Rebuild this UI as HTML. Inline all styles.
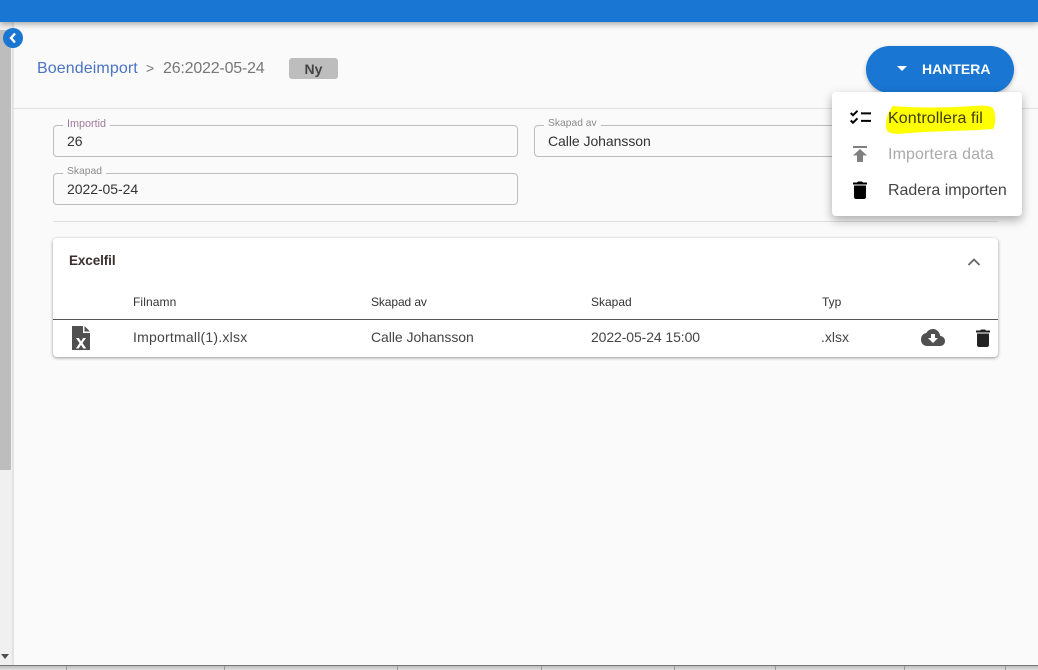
<!DOCTYPE html>
<html>
<head>
<meta charset="utf-8">
<style>
html,body{margin:0;padding:0;width:1038px;height:670px;overflow:hidden;background:#fafafa;font-family:"Liberation Sans",sans-serif;color:#333}
div,span,svg{position:absolute;box-sizing:border-box}
.t{white-space:nowrap;line-height:16px}
.field{border:1px solid #bdbdbd;border-radius:4px;height:32px}
.lab{font-size:10.300px;color:#8a8a8a;background:#fafafa;padding:0 4px;line-height:12px;white-space:nowrap}
.val{font-size:14px;color:#333;white-space:nowrap;line-height:16px}
.th{font-size:12px;color:#333;white-space:nowrap;line-height:14px}
.td{font-size:14px;color:#444;white-space:nowrap;line-height:16px}
.mi{font-size:16px;white-space:nowrap;line-height:18px;color:#444}
</style>
</head>
<body>
<!-- left scroll rail -->
<div style="left:0;top:22px;width:13px;height:643px;background:#f0f0f0;border-right:1px solid #e2e2e2"></div>
<div style="left:0;top:30px;width:11px;height:440px;background:#bdbdbd"></div>
<div style="left:13px;top:22px;width:1px;height:643px;background:#e4e4e4"></div>
<svg style="left:1px;top:654px" width="8" height="5" viewBox="0 0 8 5"><path d="M0 0H8L4 5Z" fill="#505050"/></svg>

<!-- top bar -->
<div style="left:0;top:0;width:1038px;height:22px;background:#1976d2;box-shadow:0 2px 6px rgba(0,0,0,.35)"></div>

<!-- back button -->
<div style="left:3px;top:28px;width:20px;height:20px;border-radius:50%;background:#1976d2"></div>
<svg style="left:3px;top:28px" width="20" height="20" viewBox="0 0 20 20"><path d="M12 5.500L8 10L12 14.500" fill="none" stroke="#fff" stroke-width="2.400"/></svg>

<!-- breadcrumb -->
<div class="t" style="left:37px;top:61px;font-size:16px;color:#4a74c4;letter-spacing:.1px">Boendeimport</div>
<div class="t" style="left:146px;top:60px;font-size:14px;color:#777">&gt;</div>
<div class="t" style="left:163px;top:61px;font-size:16px;color:#777;letter-spacing:-.2px">26:2022-05-24</div>
<div style="left:289px;top:58px;width:49px;height:21px;background:#bdbdbd;border-radius:3px"></div>
<div class="t" style="left:289px;top:61px;width:49px;text-align:center;font-size:14px;font-weight:bold;color:#444">Ny</div>

<div style="left:14px;top:108px;width:1024px;height:1px;background:#e0e0e0"></div>

<!-- fields -->
<div class="field" style="left:53px;top:125px;width:465px"></div>
<div class="lab" style="left:63px;top:118px;height:8px;overflow:visible;font-size:10.800px"><span style="position:static;color:#a07a9a">Importid</span></div>
<div class="val" style="left:67px;top:133px">26</div>

<div class="field" style="left:534px;top:125px;width:464px"></div>
<div class="lab" style="left:544px;top:118px;height:8px">Skapad av</div>
<div class="val" style="left:548px;top:133px;letter-spacing:-.05px">Calle Johansson</div>

<div class="field" style="left:53px;top:173px;width:465px"></div>
<div class="lab" style="left:63px;top:166px;height:8px">Skapad</div>
<div class="val" style="left:67px;top:181px;letter-spacing:-.05px">2022-05-24</div>

<div style="left:53px;top:221px;width:945px;height:1px;background:#e0e0e0"></div>

<!-- card -->
<div style="left:53px;top:238px;width:945px;height:119px;background:#fff;border-radius:4px;box-shadow:0 1px 3px rgba(0,0,0,.4)"></div>
<div class="t" style="left:69px;top:253px;font-size:13.500px;font-weight:bold;color:#3a3030;letter-spacing:-.1px">Excelfil</div>
<svg style="left:966px;top:254px" width="16" height="16" viewBox="0 0 16 16"><path d="M2.500 11L8 5.500L13.500 11" fill="none" stroke="#666" stroke-width="1.800"/></svg>

<div class="th" style="left:133px;top:295px;letter-spacing:.1px">Filnamn</div>
<div class="th" style="left:371px;top:295px;letter-spacing:-.1px">Skapad av</div>
<div class="th" style="left:591px;top:295px">Skapad</div>
<div class="th" style="left:822px;top:295px">Typ</div>
<div style="left:53px;top:319px;width:945px;height:1px;background:#555"></div>

<svg style="left:72px;top:326px" width="18" height="24" viewBox="0 0 18 24"><path d="M0 0H11V7H18V24H0Z" fill="#505050"/><path d="M12.500 0L18 5.500H12.500Z" fill="#505050"/><text x="9" y="22.500" font-family="Liberation Sans,sans-serif" font-size="19" font-weight="bold" fill="#fff" text-anchor="middle">x</text></svg>
<div class="td" style="left:133px;top:329px;letter-spacing:.22px">Importmall(1).xlsx</div>
<div class="td" style="left:371px;top:329px;letter-spacing:-.05px">Calle Johansson</div>
<div class="td" style="left:591px;top:329px;letter-spacing:-.1px">2022-05-24 15:00</div>
<div class="td" style="left:821px;top:329px">.xlsx</div>
<svg style="left:921px;top:329px" width="24" height="18" viewBox="0 0 24 18"><path d="M19.300 7C18.600 3 15.600 0 12 0 9.100 0 6.600 1.600 5.400 4 2.300 4.400 0 6.900 0 10.500 0 14.600 2.700 17 6 17H19C21.800 17 24 15 24 12 24 9.300 22 7.200 19.300 7Z" fill="#505050"/><path d="M10 5H14V9H17L12 14L7 9H10Z" fill="#fff"/></svg>
<svg style="left:976px;top:329px" width="14" height="18" viewBox="0 0 14 18"><path d="M1 4.500H13V16C13 17.100 12.100 18 11 18H3C1.900 18 1 17.100 1 16ZM0 1.500H4L5 .5H9L10 1.500H14V3.500H0Z" fill="#222"/></svg>

<!-- hantera button -->
<div style="left:866px;top:46px;width:148px;height:47px;border-radius:24px;background:#1976d2;box-shadow:0 2px 4px rgba(0,0,0,.25)"></div>
<svg style="left:897px;top:66px" width="10" height="6" viewBox="0 0 10 6"><path d="M0 0H10L5 5Z" fill="#fff"/></svg>
<div class="t" style="left:922px;top:61px;font-size:14px;font-weight:bold;color:#fff">HANTERA</div>

<!-- menu -->
<div style="left:832px;top:92px;width:190px;height:124px;background:#fff;border-radius:4px;box-shadow:0 4px 10px rgba(0,0,0,.32)"></div>
<svg style="left:885px;top:104px" width="113" height="31" viewBox="0 0 113 31"><path d="M8 2C30 4 60 4 88 2 98 1 106 2 108 4 111 10 111 20 108 25 85 27 40 27 14 30 6 30 0 29 1 20 1 14 3 8 8 2Z" fill="#ffff00"/></svg>

<svg style="left:850px;top:110px" width="21" height="15" viewBox="0 0 21 15"><path d="M.7 3L3 5.200 7.500 .8M.7 10.500L3 12.700 7.500 8.300" fill="none" stroke="#000" stroke-width="2"/><path d="M11 2.400H21V4.400H11ZM11 9.900H21V11.900H11Z" fill="#000"/></svg>
<div class="mi" style="left:888px;top:110px;color:#3d3d10;letter-spacing:.1px">Kontrollera fil</div>

<svg style="left:853px;top:146px" width="14" height="16" viewBox="0 0 14 16"><path d="M0 0H14V2H0ZM7 3L14 9.500H10V16H4V9.500H0Z" fill="#808080"/></svg>
<div class="mi" style="left:888px;top:146px;color:#aaa;letter-spacing:.12px">Importera data</div>

<svg style="left:853px;top:181px" width="14" height="18" viewBox="0 0 14 18"><path d="M1 4.500H13V16C13 17.100 12.100 18 11 18H3C1.900 18 1 17.100 1 16ZM0 1.500H4L5 .5H9L10 1.500H14V3.500H0Z" fill="#000"/></svg>
<div class="mi" style="left:888px;top:182px;letter-spacing:-.03px">Radera importen</div>

<!-- bottom strip -->
<div style="left:0;top:665px;width:1038px;height:5px;background:linear-gradient(#bdbdbd,#dedede);border-top:1px solid #777"></div>
<div style="left:66px;top:666px;width:1px;height:4px;background:#999"></div>
<div style="left:224px;top:666px;width:1px;height:4px;background:#999"></div>
<div style="left:397px;top:666px;width:1px;height:4px;background:#999"></div>
<div style="left:541px;top:666px;width:1px;height:4px;background:#999"></div>
<div style="left:674px;top:666px;width:1px;height:4px;background:#999"></div>
<div style="left:775px;top:666px;width:1px;height:4px;background:#999"></div>
<div style="left:904px;top:666px;width:1px;height:4px;background:#999"></div>
<div style="left:1005px;top:666px;width:1px;height:4px;background:#999"></div>
</body>
</html>
